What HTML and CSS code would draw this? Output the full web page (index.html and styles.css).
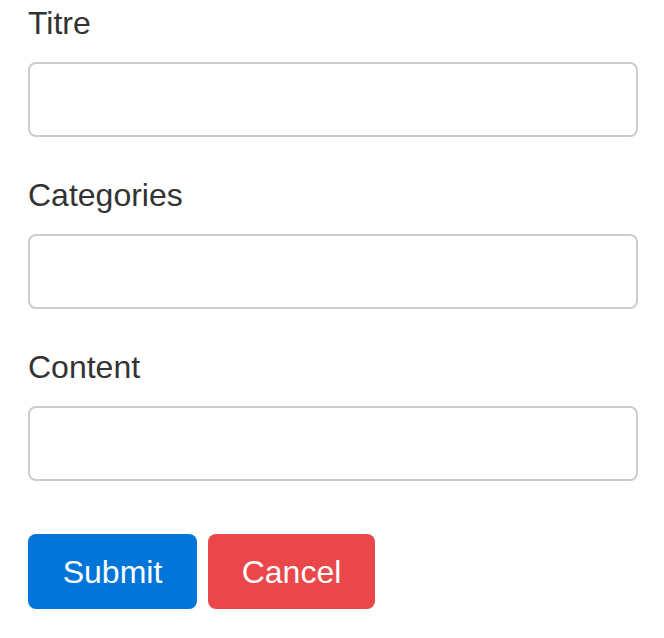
FILE: index.html
```html
<!DOCTYPE html>
<html>
<head>
<meta charset="utf-8">
<link rel="stylesheet" href="styles.css">
</head>
<body>
<form class="form">
  <div class="group">
    <label class="label">Titre</label>
    <input class="input" type="text">
  </div>
  <div class="group">
    <label class="label">Categories</label>
    <input class="input" type="text">
  </div>
  <div class="group">
    <label class="label">Content</label>
    <input class="input" type="text">
  </div>
  <div class="actions">
    <button type="button" class="btn btn-primary">Submit</button>
    <button type="button" class="btn btn-danger">Cancel</button>
  </div>
</form>
</body>
</html>
```
FILE: styles.css
```css
html, body {
  margin: 0;
  padding: 0;
  background: #fff;
}
body {
  font-family: "Liberation Sans", Arial, sans-serif;
  color: #333;
}
.form {
  width: 610px;
  margin-left: 28px;
  padding-top: 0;
  display: flex;
  flex-direction: column;
}
.group {
  display: flex;
  flex-direction: column;
  margin-bottom: 35px;
}
.label {
  font-size: 32px;
  line-height: 48px;
  height: 48px;
  margin-top: -1px;
  margin-bottom: 15px;
  color: #333;
}
.input {
  box-sizing: border-box;
  height: 75px;
  width: 100%;
  border: 2px solid #cccccc;
  border-radius: 8px;
  background: #fff;
  margin: 0;
  padding: 0 20px;
  font-size: 32px;
}
.actions {
  display: flex;
  gap: 11px;
  margin-top: 18px;
}
.btn {
  box-sizing: border-box;
  height: 75px;
  border: none;
  border-radius: 8px;
  color: #fff;
  font-family: "Liberation Sans", Arial, sans-serif;
  font-size: 32px;
  padding: 2px 0 0 0;
  margin: 0;
}
.btn-primary {
  width: 169px;
  background: #0275d8;
}
.btn-danger {
  width: 167px;
  background: #e9474a;
}
```
